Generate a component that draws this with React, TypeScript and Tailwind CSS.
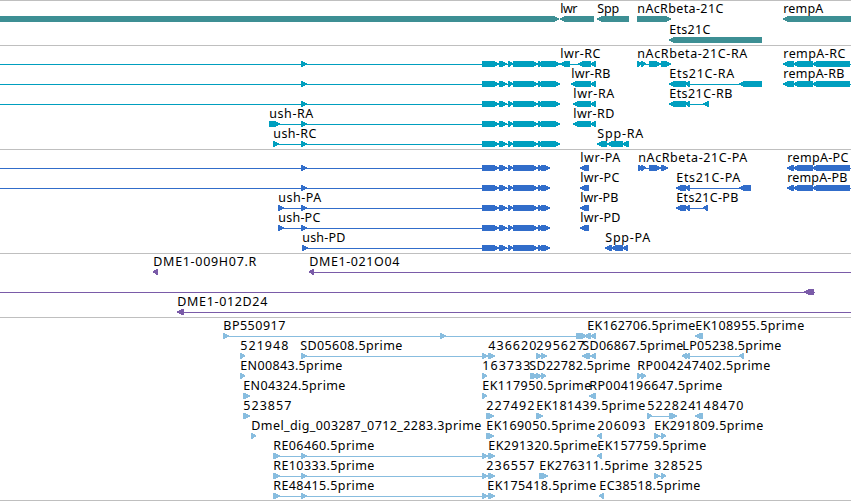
type Dir = 'r' | 'l';
/** A labelled name: text, left edge, right edge. */
type Label = [string, number, number];
/** An arrow-shaped block: left edge, right edge, direction. */
type Block = [number, number, Dir];
type Row = { labels?: Label[]; lines?: [number, number][]; blocks?: Block[] };
type TrackData = { height: string; h: number; first: number; pitch: number; color: string; rows: Row[] };

const right = (pairs: number[][]): Block[] => pairs.map(([a, b]) => [a, b, 'r']);
const left = (pairs: number[][]): Block[] => pairs.map(([a, b]) => [a, b, 'l']);

const shared = [[301, 307], [482, 499], [499, 507], [508, 513], [513, 538], [538, 542]];
const ushR = right([...shared, [541, 560]]);
const ushP = right([...shared, [541, 550]]);
const rempR = left([[783, 794], [793, 813], [812, 850]]);
const rempP = left([[787, 794], [793, 813], [812, 850]]);
const reads = right([[273, 280], [301, 307], [482, 488], [488, 495]]);

const tracks: TrackData[] = [
  {
    height: 'h-[45px]', h: 44, first: 12, pitch: 21, color: '#3d8f94',
    rows: [
      {
        labels: [['lwr', 560, 577], ['Spp', 597, 619], ['nAcRbeta-21C', 637, 723], ['rempA', 783, 823]],
        blocks: [[-10, 559, 'r'], [560, 594, 'l'], [597, 629, 'l'], [637, 671, 'r'], [783, 860, 'l']],
      },
      { labels: [['Ets21C', 669, 710]], blocks: [[669, 762, 'l']] },
    ],
  },
  {
    height: 'h-[104px]', h: 103, first: 12, pitch: 20, color: '#009fbf',
    rows: [
      {
        labels: [['lwr-RC', 560, 600], ['nAcRbeta-21C-RA', 637, 747], ['rempA-RC', 783, 845]],
        lines: [[0, 559], [560, 596], [637, 671], [783, 851]],
        blocks: [...ushR, ...left([[560, 570], [578, 591], [590, 596]]), ...right([[637, 642], [641, 646], [649, 661], [661, 671]]), ...rempR],
      },
      {
        labels: [['lwr-RB', 571, 610], ['Ets21C-RA', 669, 734], ['rempA-RB', 783, 844]],
        lines: [[0, 559], [571, 596], [669, 762], [783, 851]],
        blocks: [...ushR, ...left([[571, 591], [590, 596], [669, 686], [685, 690], [739, 762]]), ...rempR],
      },
      {
        labels: [['lwr-RA', 573, 614], ['Ets21C-RB', 669, 732]],
        lines: [[0, 559], [573, 596], [669, 709]],
        blocks: [...ushR, ...left([[573, 591], [590, 596], [669, 686], [685, 690], [703, 709]])],
      },
      {
        labels: [['ush-RA', 269, 313], ['lwr-RD', 573, 614]],
        lines: [[269, 559], [573, 596]],
        blocks: [[269, 280, 'r'], ...ushR, ...left([[573, 591], [590, 596]])],
      },
      {
        labels: [['ush-RC', 273, 316], ['Spp-RA', 597, 643]],
        lines: [[273, 559], [597, 629]],
        blocks: [[273, 279, 'r'], ...ushR, ...left([[597, 607], [607, 623], [622, 629]])],
      },
    ],
  },
  {
    height: 'h-[104px]', h: 103, first: 12, pitch: 20, color: '#316dca',
    rows: [
      {
        labels: [['lwr-PA', 580, 620], ['nAcRbeta-21C-PA', 638, 747], ['rempA-PC', 787, 848]],
        lines: [[0, 549], [638, 668], [787, 851]],
        blocks: [...ushP, [580, 589, 'l'], ...right([[638, 642], [641, 646], [649, 661], [661, 668]]), ...rempP],
      },
      {
        labels: [['lwr-PC', 580, 619], ['Ets21C-PA', 676, 740], ['rempA-PB', 787, 847]],
        lines: [[0, 549], [676, 751], [787, 851]],
        blocks: [...ushP, ...left([[580, 589], [676, 686], [685, 690], [739, 751]]), ...rempP],
      },
      {
        labels: [['ush-PA', 278, 321], ['lwr-PB', 580, 618], ['Ets21C-PB', 676, 738]],
        lines: [[278, 550], [676, 708]],
        blocks: [[278, 284, 'r'], ...ushP, ...left([[580, 589], [676, 686], [685, 690], [703, 708]])],
      },
      {
        labels: [['ush-PC', 278, 320], ['lwr-PD', 580, 620]],
        lines: [[278, 550]],
        blocks: [[278, 284, 'r'], ...ushP, [580, 589, 'l']],
      },
      {
        labels: [['ush-PD', 302, 345], ['Spp-PA', 605, 650]],
        lines: [[302, 550], [605, 628]],
        blocks: [...right([[302, 308]]), ...ushP.slice(1), ...left([[605, 612], [611, 623], [622, 628]])],
      },
    ],
  },
  {
    height: 'h-[64px]', h: 63, first: 12, pitch: 20, color: '#7a5ba8',
    rows: [
      {
        labels: [['DME1-009H07.R', 153, 256], ['DME1-021O04', 309, 399]],
        lines: [[309, 851]],
        blocks: left([[153, 158], [309, 314]]),
      },
      { lines: [[0, 815]], blocks: left([[804, 814]]) },
      { labels: [['DME1-012D24', 177, 267]], lines: [[177, 851]], blocks: left([[177, 184]]) },
    ],
  },
  {
    height: 'h-[183px]', h: 182, first: 12, pitch: 20, color: '#88bddf',
    rows: [
      {
        labels: [['BP550917', 223, 285], ['EK162706.5prime', 587, 695], ['EK108955.5prime', 695, 804]],
        lines: [[223, 596]],
        blocks: [...right([[223, 229], [440, 446], [576, 587]]), ...left([[584, 591], [590, 596], [695, 703]])],
      },
      {
        labels: [['521948', 240, 288], ['SD05608.5prime', 300, 402], ['436620', 488, 536], ['295627', 536, 584], ['SD06867.5prime', 582, 683], ['LP05238.5prime', 682, 781]],
        lines: [[301, 495], [582, 596], [682, 744]],
        blocks: [...right([[240, 245], [301, 307], [482, 488], [488, 495], [536, 542], [541, 547]]), ...left([[582, 590], [590, 596], [682, 687], [685, 690], [739, 744]])],
      },
      {
        labels: [['EN00843.5prime', 240, 342], ['163733', 482, 530], ['SD22782.5prime', 529, 630], ['RP004247402.5prime', 637, 770]],
        lines: [[530, 546]],
        blocks: right([[240, 245], [482, 487], [530, 538], [536, 542], [541, 546], [637, 642], [641, 646]]),
      },
      {
        labels: [['EN04324.5prime', 243, 345], ['EK117950.5prime', 482, 591], ['RP004196647.5prime', 589, 722]],
        blocks: [...right([[243, 250], [482, 487]]), [589, 596, 'l']],
      },
      {
        labels: [['523857', 243, 291], ['227492', 486, 534], ['EK181439.5prime', 536, 645], ['522824', 647, 695], ['148470', 695, 743]],
        lines: [[647, 677]],
        blocks: [...right([[243, 250], [486, 494], [536, 543], [647, 652], [669, 677]]), [695, 703, 'l']],
      },
      {
        labels: [['Dmel_dig_003287_0712_2283.3prime', 251, 481], ['EK169050.5prime', 486, 595], ['206093', 597, 645], ['EK291809.5prime', 654, 763]],
        lines: [[654, 666]],
        blocks: [...right([[251, 256], [486, 494], [654, 660], [661, 666]]), [597, 602, 'l']],
      },
      {
        labels: [['RE06460.5prime', 273, 374], ['EK291320.5prime', 488, 597], ['EK157759.5prime', 597, 706]],
        lines: [[273, 495]],
        blocks: [...reads, [597, 602, 'l']],
      },
      {
        labels: [['RE10333.5prime', 273, 374], ['236557', 486, 534], ['EK276311.5prime', 539, 648], ['328525', 654, 702]],
        lines: [[273, 495], [654, 666]],
        blocks: [...reads, ...right([[539, 548], [654, 660], [661, 666]])],
      },
      {
        labels: [['RE48415.5prime', 273, 374], ['EK175418.5prime', 487, 596], ['EC38518.5prime', 599, 700]],
        lines: [[273, 495]],
        blocks: [...reads, [599, 604, 'l']],
      },
    ],
  },
];

function Arrow({ block: [a, b, dir], y }: { block: Block; y: number }) {
  const head = Math.min(b - a, 6);
  const back = dir === 'r' ? a : b;
  const tip = dir === 'r' ? b : a;
  const s = dir === 'r' ? 1 : -1;
  const neck = tip - s * head;
  return (
    <polygon
      shapeRendering="crispEdges"
      points={`${back},${y} ${neck + s},${y} ${tip},${y + 2.4} ${tip},${y + 3.6} ${neck + s},${y + 6} ${back},${y + 6}`}
    />
  );
}

function Track({ track }: { track: TrackData }) {
  return (
    <section className={`${track.height} w-full shrink-0 border-t border-[#bfbfbf]`}>
      <svg width={851} height={track.h} className="block">
        {track.rows.map((row, i) => {
          const base = track.first + i * track.pitch;
          return (
            <g key={i} fill={track.color}>
              {row.lines?.map(([a, b], k) => (
                <rect key={k} x={a} y={base + 6} width={b - a} height={1} />
              ))}
              {row.blocks?.map((block, k) => <Arrow key={k} block={block} y={base + 3} />)}
              {row.labels?.map(([text, a, b]) => (
                <text key={text} x={a + 0.3} y={base} textLength={b - a} fill="#000" className="text-[12.5px]">
                  {text}
                </text>
              ))}
            </g>
          );
        })}
      </svg>
    </section>
  );
}

export default function App() {
  return (
    <main className="flex h-[501px] w-[851px] flex-col overflow-hidden border-b border-[#bfbfbf] bg-white font-['Noto_Sans','DejaVu_Sans',sans-serif]">
      {tracks.map((track, i) => (
        <Track key={i} track={track} />
      ))}
    </main>
  );
}
